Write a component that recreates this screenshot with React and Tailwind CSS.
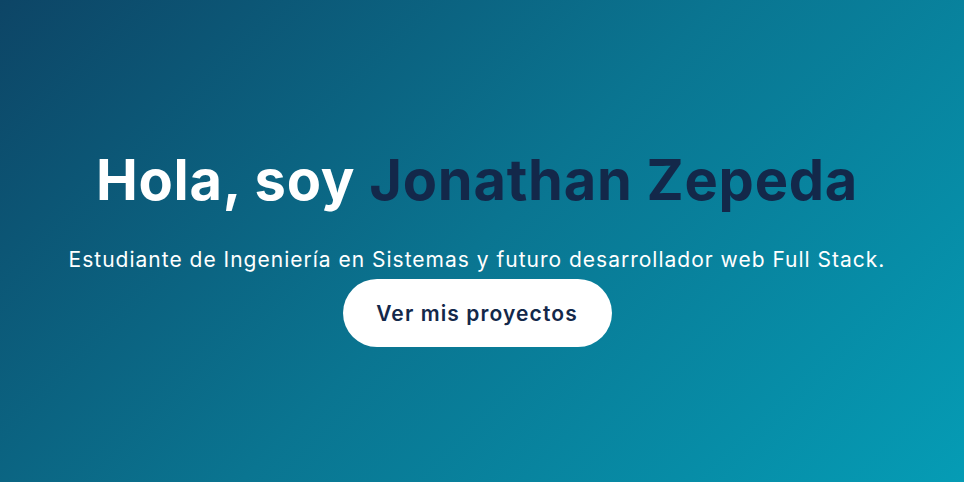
import React from 'react';

const App = () => {
  return (
    <section
      className="min-h-screen w-full flex flex-col items-center justify-center text-center bg-[linear-gradient(135deg,#0d4566_0%,#0a7591_50%,#059cb5_100%)] pl-6 pr-[34px] pt-[12px]"
      style={{ fontFamily: 'Inter, "Noto Sans", sans-serif' }}
    >
      <h1 className="text-[56px] font-bold leading-[1.2] text-white tracking-[0.75px]">
        Hola, soy <span className="text-[#13284a]">Jonathan Zepeda</span>
      </h1>
      <p className="mt-[30px] text-[21px] leading-[1.5] text-white tracking-[1px]">
        Estudiante de Ingeniería en Sistemas y futuro desarrollador web Full Stack.
      </p>
      <button className="mt-[4px] h-[68px] w-[269px] rounded-full bg-white text-[21px] font-semibold text-[#13284a] tracking-[1.1px]">
        Ver mis proyectos
      </button>
    </section>
  );
};

export default App;
